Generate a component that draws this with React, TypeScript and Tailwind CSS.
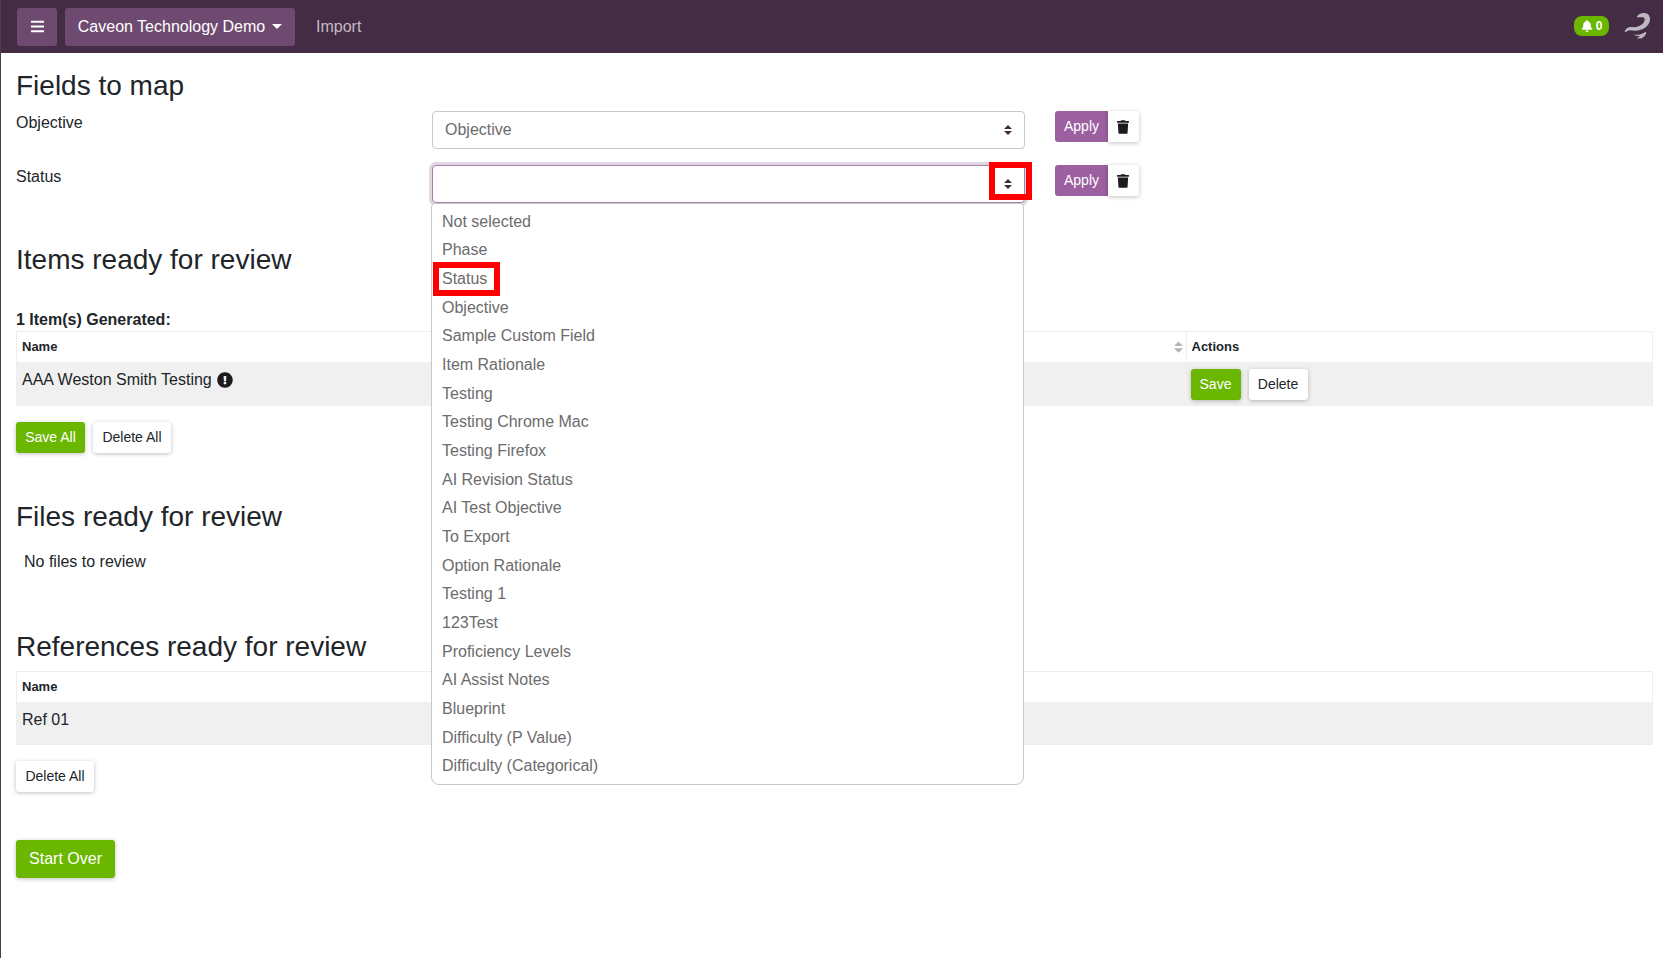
import { FaBars, FaBell, FaExclamationCircle, FaTrash } from "react-icons/fa";

const fieldOptions = [
    "Not selected", "Phase", "Status", "Objective", "Sample Custom Field", "Item Rationale", "Testing",
    "Testing Chrome Mac", "Testing Firefox", "AI Revision Status", "AI Test Objective", "To Export",
    "Option Rationale", "Testing 1", "123Test", "Proficiency Levels", "AI Assist Notes", "Blueprint",
    "Difficulty (P Value)", "Difficulty (Categorical)",
];

const btnShadow = "shadow-[0_1px_4px_rgba(0,0,0,0.25)]";

function SortArrows({ className }: { className: string }) {
    return (
        <svg viewBox="0 0 4 5" className={className}>
            <path d="M2 0L0 2h4zm0 5L0 3h4z" />
        </svg>
    );
}

function WhiteButton({ label, className = "" }: { label: string; className?: string }) {
    return (
        <button className={`h-[31px] rounded-[3px] bg-white text-[14px] text-[#212529] ${btnShadow} ${className}`}>{label}</button>
    );
}

function GreenButton({ label, className = "" }: { label: string; className?: string }) {
    return (
        <button className={`h-[31px] rounded-[3px] bg-[#6bb700] text-[14px] text-white ${btnShadow} ${className}`}>{label}</button>
    );
}

function FieldRow({ label, value, focused }: { label: string; value: string; focused?: boolean }) {
    return (
        <div className="flex h-[54px] items-start">
            <div className="w-[416px] pt-[3px] text-[16px] leading-[20px] text-[#212529]">{label}</div>
            <div
                className={`relative mt-[1px] flex h-[38px] w-[593px] items-center rounded-[4px] border bg-white pl-[12px] text-[16px] text-[#6c6c6c] ${
                    focused ? "border-[#a57fa8] shadow-[0_0_0_3px_#e2d6e3]" : "border-[#c8c8c8]"
                }`}
            >
                {value}
                <SortArrows className="absolute right-[12px] top-[13px] h-[10px] w-[8px] fill-[#432c44]" />
            </div>
            <div className="ml-[30px] mt-[1px] flex">
                <button className="h-[31px] w-[53px] rounded-l-[3px] bg-[#9c5fa0] text-[14px] text-white">Apply</button>
                <button className={`flex h-[31px] w-[31px] items-center justify-center rounded-r-[3px] bg-white pr-[2px] ${btnShadow}`}>
                    <FaTrash className="h-[14px] w-[12px] text-[#1f1a20]" />
                </button>
            </div>
        </div>
    );
}

function SectionTitle({ children, className }: { children: string; className: string }) {
    return <h3 className={`text-[28px] leading-[34px] text-[#212529] ${className}`}>{children}</h3>;
}

export default function App() {
    return (
        <div className="relative min-h-[958px] border-l border-[#444] bg-white font-['Liberation_Sans',Arial,sans-serif]">
            <nav className="flex h-[53px] items-center bg-[#432c44] pl-[16px] pr-[7px]">
                <button className="flex h-[38px] w-[40px] items-center justify-center rounded-[3px] bg-[#6f4a70]">
                    <FaBars className="h-[15px] w-[15px] text-white" />
                </button>
                <button className="ml-[8px] flex h-[38px] w-[230px] items-center justify-center gap-[7px] rounded-[3px] bg-[#6f4a70] text-[16px] text-white">
                    Caveon Technology Demo
                    <span className="h-0 w-0 border-x-[5px] border-t-[5px] border-x-transparent border-t-white" />
                </button>
                <span className="ml-[21px] text-[16px] text-[#c4bbc5]">Import</span>
                <div className="ml-auto flex items-center gap-[11px]">
                    <div className="mb-[1px] flex h-[20px] w-[35px] items-center justify-center gap-[3px] rounded-[8px] bg-[#6bb700] text-[12px] font-bold text-white">
                        <FaBell className="h-[12px] w-[12px]" />
                        0
                    </div>
                    <svg viewBox="0 0 108 108" className="h-[36px] w-[36px]">
                        <path d="M50 24C56 12 74 8 84 16C92 24 92 38 84 48C74 60 58 66 44 65C34 64 28 62 22 66C20 68 16 70 14 68C16 60 24 54 34 54C48 56 62 52 70 42C76 34 76 26 68 25C62 24 56 26 50 24Z" fill="#c0b8c1" />
                        <path d="M40 76C52 80 66 76 78 68C80 72 76 80 70 84C66 88 60 90 50 88C54 86 58 84 60 82C52 82 44 80 40 76Z" fill="#c0b8c1" />
                    </svg>
                </div>
            </nav>

            <main className="pl-[15px] pr-[10px]">
                <SectionTitle className="pt-[16px]">Fields to map</SectionTitle>
                <div className="pt-[7px]">
                    <FieldRow label="Objective" value="Objective" />
                    <FieldRow label="Status" value="" focused />
                </div>

                <SectionTitle className="mt-[25px]">Items ready for review</SectionTitle>
                <div className="mt-[31px] text-[16px] font-bold leading-[23px] text-[#212529]">1 Item(s) Generated:</div>
                <div className="grid grid-cols-[1169.5px_1fr] border border-[#eee] border-b-0">
                    <div className="relative flex h-[30px] items-center border-r border-[#eee] pl-[5px] text-[13px] font-bold text-[#212529]">
                        Name
                        <SortArrows className="absolute right-[3px] top-[8px] h-[14px] w-[9px] fill-[#b5b5b5]" />
                    </div>
                    <div className="flex h-[30px] items-center pl-[5px] text-[13px] font-bold text-[#212529]">Actions</div>
                    <div className="flex h-[44px] items-start gap-[5px] border-b border-[#eee] bg-[#f0f0f0] pl-[5px] pt-[8px] text-[16px] leading-[20px] text-[#212529]">
                        AAA Weston Smith Testing
                        <FaExclamationCircle className="mt-[2px] h-[16px] w-[16px] text-[#1f1a20]" />
                    </div>
                    <div className="flex h-[44px] gap-[8px] border-b border-[#eee] bg-[#f0f0f0] pl-[4px] pt-[7px]">
                        <GreenButton label="Save" className="w-[50px]" />
                        <WhiteButton label="Delete" className="w-[59px]" />
                    </div>
                </div>
                <div className="mt-[16px] flex gap-[8px]">
                    <GreenButton label="Save All" className="w-[69px]" />
                    <WhiteButton label="Delete All" className="w-[78px]" />
                </div>

                <SectionTitle className="mt-[47px]">Files ready for review</SectionTitle>
                <div className="mt-[16px] pl-[8px] text-[16px] leading-[24px] text-[#212529]">No files to review</div>

                <SectionTitle className="mt-[56px]">References ready for review</SectionTitle>
                <div className="mt-[7px] border border-[#eee] border-b-0">
                    <div className="flex h-[30px] items-center pl-[5px] text-[13px] font-bold text-[#212529]">Name</div>
                    <div className="h-[43px] border-b border-[#eee] bg-[#f0f0f0] pl-[5px] pt-[8px] text-[16px] leading-[20px] text-[#212529]">Ref 01</div>
                </div>
                <WhiteButton label="Delete All" className="mt-[16px] block w-[78px]" />
                <button className={`mt-[48px] block h-[38px] w-[99px] rounded-[3px] bg-[#6bb700] text-[16px] text-white ${btnShadow}`}>
                    Start Over
                </button>
            </main>

            {/* open select list, lies over the tables */}
            <ul className="absolute left-[430px] top-[203px] h-[582px] w-[593px] rounded-b-[8px] rounded-t-[4px] border border-[#c8c8c8] bg-white pt-[3.5px] text-[16px] text-[#6c6c6c]">
                {fieldOptions.map((option) => (
                    <li key={option} className="flex h-[28.67px] items-center pl-[10px]">{option}</li>
                ))}
            </ul>

            {/* red annotation boxes */}
            <div className="absolute left-[988px] top-[162px] h-[38px] w-[43px] border-[6px] border-[#ff0000]" />
            <div className="absolute left-[432px] top-[262px] h-[34px] w-[67px] border-[6px] border-[#ff0000]" />
        </div>
    );
}
